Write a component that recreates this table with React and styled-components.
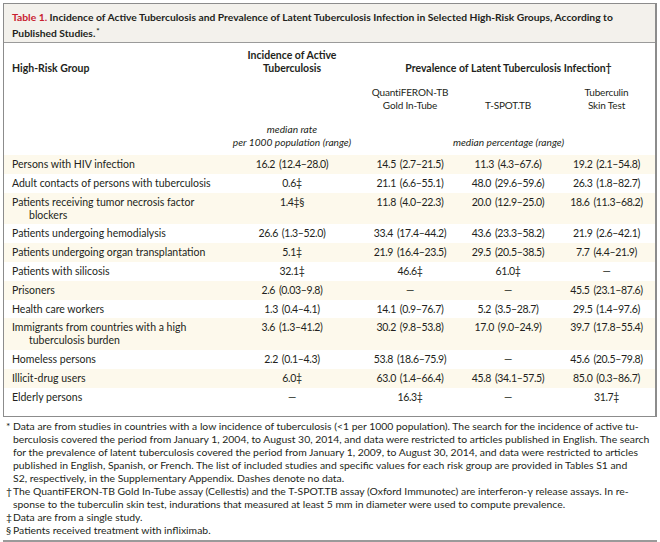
import React from "react";
import styled, { createGlobalStyle } from "styled-components";

const GlobalStyle = createGlobalStyle`
  body {
    margin: 0;
    background: #ffffff;
    font-family: "Lato", "Liberation Sans", sans-serif;
    color: #231f20;
  }
`;

const COLS = "218px 140px 96px 100px 97px";

const rows = [
  { label: ["Persons with HIV infection"], values: ["16.2 (12.4–28.0)", "14.5 (2.7–21.5)", "11.3 (4.3–67.6)", "19.2 (2.1–54.8)"] },
  { label: ["Adult contacts of persons with tuberculosis"], values: ["0.6‡", "21.1 (6.6–55.1)", "48.0 (29.6–59.6)", "26.3 (1.8–82.7)"] },
  { label: ["Patients receiving tumor necrosis factor", "blockers"], values: ["1.4‡§", "11.8 (4.0–22.3)", "20.0 (12.9–25.0)", "18.6 (11.3–68.2)"] },
  { label: ["Patients undergoing hemodialysis"], values: ["26.6 (1.3–52.0)", "33.4 (17.4–44.2)", "43.6 (23.3–58.2)", "21.9 (2.6–42.1)"] },
  { label: ["Patients undergoing organ transplantation"], values: ["5.1‡", "21.9 (16.4–23.5)", "29.5 (20.5–38.5)", "7.7 (4.4–21.9)"] },
  { label: ["Patients with silicosis"], values: ["32.1‡", "46.6‡", "61.0‡", "—"] },
  { label: ["Prisoners"], values: ["2.6 (0.03–9.8)", "—", "—", "45.5 (23.1–87.6)"] },
  { label: ["Health care workers"], values: ["1.3 (0.4–4.1)", "14.1 (0.9–76.7)", "5.2 (3.5–28.7)", "29.5 (1.4–97.6)"] },
  { label: ["Immigrants from countries with a high", "tuberculosis burden"], values: ["3.6 (1.3–41.2)", "30.2 (9.8–53.8)", "17.0 (9.0–24.9)", "39.7 (17.8–55.4)"] },
  { label: ["Homeless persons"], values: ["2.2 (0.1–4.3)", "53.8 (18.6–75.9)", "—", "45.6 (20.5–79.8)"] },
  { label: ["Illicit-drug users"], values: ["6.0‡", "63.0 (1.4–66.4)", "45.8 (34.1–57.5)", "85.0 (0.3–86.7)"] },
  { label: ["Elderly persons"], values: ["—", "16.3‡", "—", "31.7‡"] },
];

const notes = [
  {
    mark: "*",
    lines: [
      "Data are from studies in countries with a low incidence of tuberculosis (<1 per 1000 population). The search for the incidence of active tu-",
      "berculosis covered the period from January 1, 2004, to August 30, 2014, and data were restricted to articles published in English. The search",
      "for the prevalence of latent tuberculosis covered the period from January 1, 2009, to August 30, 2014, and data were restricted to articles",
      "published in English, Spanish, or French. The list of included studies and specific values for each risk group are provided in Tables S1 and",
      "S2, respectively, in the Supplementary Appendix. Dashes denote no data.",
    ],
  },
  {
    mark: "†",
    lines: [
      "The QuantiFERON-TB Gold In-Tube assay (Cellestis) and the T-SPOT.TB assay (Oxford Immunotec) are interferon-γ release assays. In re-",
      "sponse to the tuberculin skin test, indurations that measured at least 5 mm in diameter were used to compute prevalence.",
    ],
  },
  { mark: "‡", lines: ["Data are from a single study."] },
  { mark: "§", lines: ["Patients received treatment with infliximab."] },
];

const App = () => {
  return (
    <>
      <GlobalStyle />
      <Page>
        <Frame>
          <TitleBar>
            <TitleLine>
              <TableNo>Table 1.</TableNo> Incidence of Active Tuberculosis and Prevalence of Latent
              Tuberculosis Infection in Selected High-Risk Groups, According to
            </TitleLine>
            <TitleLine>
              Published Studies.<Star>*</Star>
            </TitleLine>
          </TitleBar>

          <HeadGrid>
            <HeadCell $col="1" $row="1" $align="left" $bold>
              High-Risk Group
            </HeadCell>
            <HeadCell $col="2" $row="1" $bold>
              Incidence of Active
              <br />
              Tuberculosis
            </HeadCell>
            <HeadCell $col="3 / span 3" $row="1" $bold>
              Prevalence of Latent Tuberculosis Infection†
            </HeadCell>

            <HeadCell $col="3" $row="2">
              QuantiFERON-TB
              <br />
              Gold In-Tube
            </HeadCell>
            <HeadCell $col="4" $row="2">
              T-SPOT.TB
            </HeadCell>
            <HeadCell $col="5" $row="2">
              Tuberculin
              <br />
              Skin Test
            </HeadCell>

            <HeadCell $col="2" $row="3" $italic>
              median rate
              <br />
              per 1000 population (range)
            </HeadCell>
            <HeadCell $col="3 / span 3" $row="3" $italic>
              median percentage (range)
            </HeadCell>
          </HeadGrid>

          <Body>
            {rows.map((r, i) => (
              <Row key={i} $shade={i % 2 === 0}>
                <Label>
                  {r.label.map((l, j) => (
                    <LabelLine key={j} $indent={j > 0}>
                      {l}
                    </LabelLine>
                  ))}
                </Label>
                {r.values.map((v, j) => (
                  <Value key={j}>{v}</Value>
                ))}
              </Row>
            ))}
          </Body>
        </Frame>

        <Notes>
          {notes.map((n, i) => (
            <Note key={i}>
              <Mark>{n.mark}</Mark>
              {n.lines.map((l, j) => (
                <NoteLine key={j}>{l}</NoteLine>
              ))}
            </Note>
          ))}
        </Notes>
        <Rule />
      </Page>
    </>
  );
};

const Page = styled.div`
  width: 654px;
  padding: 3px 3px 0;
`;

const Frame = styled.div`
  border: 1px solid #8c8c8c;
  border-right: 2px solid #8c8c8c;
  width: 651px;
`;

const TitleBar = styled.div`
  background: #f3f1ec;
  border-bottom: 1px solid #9a9a9a;
  padding: 6px 8px 5px;
  font-size: 10.3px;
  line-height: 14px;
  font-weight: 700;
  color: #231f20;
  height: 27px;
`;

const TitleLine = styled.div`
  white-space: nowrap;
`;

const TableNo = styled.span`
  color: #c8202f;
`;

const Star = styled.span`
  font-size: 8px;
  vertical-align: 3px;
  margin-left: 1px;
`;

const HeadGrid = styled.div`
  display: grid;
  grid-template-columns: ${COLS};
  grid-template-rows: 26px 26px 26px;
  row-gap: 11px;
  padding: 6px 0 6px;
  line-height: 13px;
`;

const HeadCell = styled.div`
  grid-column: ${(p) => p.$col};
  grid-row: ${(p) => p.$row};
  align-self: end;
  text-align: ${(p) => p.$align || "center"};
  padding-left: ${(p) => (p.$align === "left" ? "8px" : "0")};
  font-size: ${(p) => (p.$bold ? "10.5px" : p.$italic ? "10.2px" : "10px")};
  font-weight: ${(p) => (p.$bold ? 700 : 400)};
  font-style: ${(p) => (p.$italic ? "italic" : "normal")};
  letter-spacing: ${(p) => (p.$bold || p.$italic ? "0" : "-0.15px")};
  white-space: nowrap;
`;

const Body = styled.div`
  padding-bottom: 9px;
`;

const Row = styled.div`
  display: grid;
  grid-template-columns: ${COLS};
  background: ${(p) => (p.$shade ? "#fdf9ec" : "#ffffff")};
  padding: 3px 0 2.8px;
  font-size: 10.5px;
  line-height: 13px;
`;

const Label = styled.div`
  padding-left: 8px;
`;

const LabelLine = styled.div`
  white-space: nowrap;
  padding-left: ${(p) => (p.$indent ? "17px" : "0")};
`;

const Value = styled.div`
  text-align: center;
  white-space: nowrap;
  letter-spacing: -0.35px;
  word-spacing: 1.5px;
`;

const Notes = styled.div`
  padding: 3px 0 0 10px;
  font-size: 10.4px;
  line-height: 13px;
`;

const Note = styled.div`
  position: relative;
`;

const Mark = styled.span`
  position: absolute;
  left: -7px;
  top: 0;
`;

const NoteLine = styled.div`
  white-space: nowrap;
`;

const Rule = styled.div`
  margin-top: 3px;
  border-top: 2px solid #9a9a9a;
`;

export default App;
